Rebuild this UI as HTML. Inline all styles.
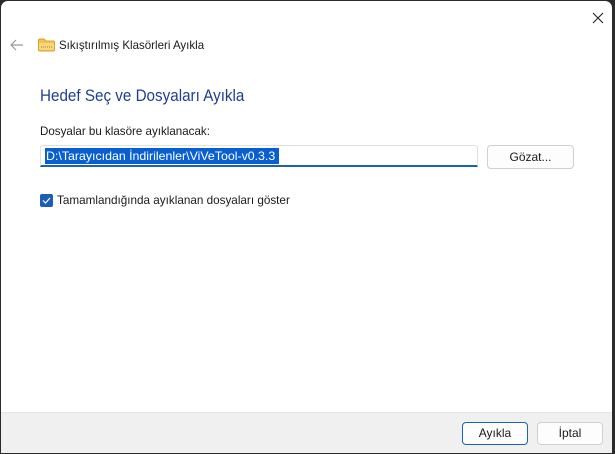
<!DOCTYPE html>
<html><head><style>
body{margin:0;width:615px;height:454px;background:#2b2b2b;font-family:"Segoe UI","Liberation Sans",sans-serif;overflow:hidden;position:relative}
.win{position:absolute;left:1px;top:1px;width:611px;height:452px;background:#fff;border-radius:7px 7px 0 0;overflow:hidden}
.abs{position:absolute;white-space:nowrap;transform-origin:left center}
.btn{position:absolute;background:#fdfdfd;border:1px solid #d0d0d0;border-radius:4px;font-size:12px;text-align:center;color:#1a1a1a;box-sizing:border-box}
</style></head><body>
<div class="win">
<svg class="abs" style="left:590px;top:10px" width="14" height="14"><path d="M2 2L12 12M12 2L2 12" stroke="#222" stroke-width="1.1"/></svg>
<svg class="abs" style="left:9px;top:38px" width="14" height="12"><path d="M1 6H13M6 1L1 6L6 11" stroke="#999" stroke-width="1.2" fill="none"/></svg>
<svg class="abs" style="left:37px;top:37px" width="17" height="14"><path d="M0.5 2.5Q0.5 1 2 1H6L8 3H15Q16.5 3 16.5 4.5V12Q16.5 13 15 13H2Q0.5 13 0.5 12Z" fill="#f3c24f" stroke="#d9a12a" stroke-width="1"/><rect x="1" y="5" width="15" height="7" fill="#f8d77a"/><path d="M3 9H14" stroke="#a08040" stroke-dasharray="1 1"/></svg>
<div class="abs" style="left:58px;top:37px;font-size:12px;color:#1a1a1a;transform:scaleX(0.96)">Sıkıştırılmış Klasörleri Ayıkla</div>
<div class="abs" style="left:39px;top:85px;font-size:17px;color:#1e3f8f;transform:scaleX(0.895)">Hedef Seç ve Dosyaları Ayıkla</div>
<div class="abs" style="left:39px;top:123px;font-size:12px;color:#1a1a1a;transform:scaleX(0.965)">Dosyalar bu klasöre ayıklanacak:</div>
<div class="abs" style="left:39px;top:144px;width:438px;height:22px;border:1px solid #e0e0e0;border-bottom:2px solid #1a62b5;box-sizing:border-box;border-radius:3px 3px 0 0"></div>
<div class="abs" style="left:44px;top:147px;width:234px;height:16px;background:#0a5fd0"></div>
<div class="abs" style="left:45px;top:147px;height:16px;line-height:16px;color:#fff;font-size:12px;transform:scaleX(1.03)">D:\Tarayıcıdan İndirilenler\ViVeTool-v0.3.3</div>
<div class="btn" style="left:486px;top:144px;width:87px;height:24px;line-height:22px">Gözat...</div>
<div class="abs" style="left:39px;top:193px;width:13px;height:13px;background:#1a5fb4;border-radius:2px"><svg width="13" height="13"><path d="M3 6.5L5.5 9L10 4" stroke="#fff" stroke-width="1.2" fill="none"/></svg></div>
<div class="abs" style="left:56px;top:192px;font-size:12px;color:#1a1a1a;transform:scaleX(0.975)">Tamamlandığında ayıklanan dosyaları göster</div>
<div class="abs" style="left:0;top:411px;width:611px;height:41px;background:#f0f0f0;border-top:1px solid #e6e6e6"></div>
<div class="btn" style="left:461px;top:421px;width:66px;height:23px;line-height:21px;border:1px solid #1a62b5">Ayıkla</div>
<div class="btn" style="left:536px;top:421px;width:66px;height:23px;line-height:21px">İptal</div>
</div>
</body></html>
